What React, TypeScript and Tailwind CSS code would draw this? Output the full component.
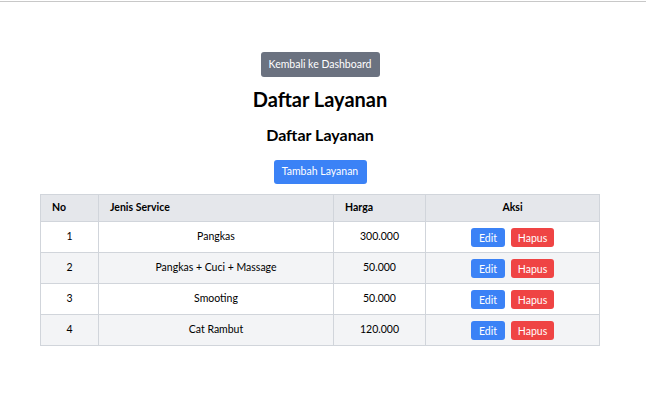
import React from "react";

interface Layanan {
  jenis: string;
  harga: string;
}

const layanan: Layanan[] = [
  { jenis: "Pangkas", harga: "300.000" },
  { jenis: "Pangkas + Cuci + Massage", harga: "50.000" },
  { jenis: "Smooting", harga: "50.000" },
  { jenis: "Cat Rambut", harga: "120.000" },
];

export default function App() {
  return (
    <div
      className="min-h-screen bg-white text-black"
      style={{ fontFamily: 'Lato, "Open Sans", sans-serif' }}
    >
      <div className="mt-px h-px bg-[#c8c8c8]" />
      <div className="flex w-[640px] flex-col items-center pt-[50px]">
        <button className="h-[25px] w-[119px] rounded-[3px] bg-[#6b7280] text-[10.5px] text-white">
          Kembali ke Dashboard
        </button>
        <h1 className="mt-[8px] text-[20px] font-bold leading-[28px]">
          Daftar Layanan
        </h1>
        <h2 className="mt-[11px] text-[16px] font-bold leading-[22px]">
          Daftar Layanan
        </h2>
        <button className="mt-[14px] h-[24px] w-[93px] rounded-[3px] bg-[#3b82f6] text-[10.5px] text-white">
          Tambah Layanan
        </button>

        <table className="mt-[10px] w-[560px] table-fixed border-collapse text-[10.5px]">
          <thead>
            <tr className="h-[27px] bg-[#e5e7eb]">
              <th className="w-[58px] border border-[#d1d5db] px-[11px] text-left font-bold">
                No
              </th>
              <th className="w-[235px] border border-[#d1d5db] px-[11px] text-left font-bold">
                Jenis Service
              </th>
              <th className="w-[92px] border border-[#d1d5db] px-[11px] text-left font-bold">
                Harga
              </th>
              <th className="border border-[#d1d5db] px-[11px] text-center font-bold">
                Aksi
              </th>
            </tr>
          </thead>
          <tbody>
            {layanan.map((item, index) => (
              <tr
                key={index}
                className={index % 2 === 1 ? "h-[31px] bg-[#f3f4f6]" : "h-[31px] bg-white"}
              >
                <td className="border border-[#d1d5db] text-center">{index + 1}</td>
                <td className="border border-[#d1d5db] text-center">{item.jenis}</td>
                <td className="border border-[#d1d5db] text-center">{item.harga}</td>
                <td className="border border-[#d1d5db]">
                  <div className="flex justify-center gap-[6px]">
                    <button className="h-[19px] w-[34px] rounded-[3px] bg-[#3b82f6] pt-px text-[10.5px] leading-[18px] text-white">
                      Edit
                    </button>
                    <button className="h-[19px] w-[43px] rounded-[3px] bg-[#ef4444] pt-px text-[10.5px] leading-[18px] text-white">
                      Hapus
                    </button>
                  </div>
                </td>
              </tr>
            ))}
          </tbody>
        </table>
      </div>
    </div>
  );
}
